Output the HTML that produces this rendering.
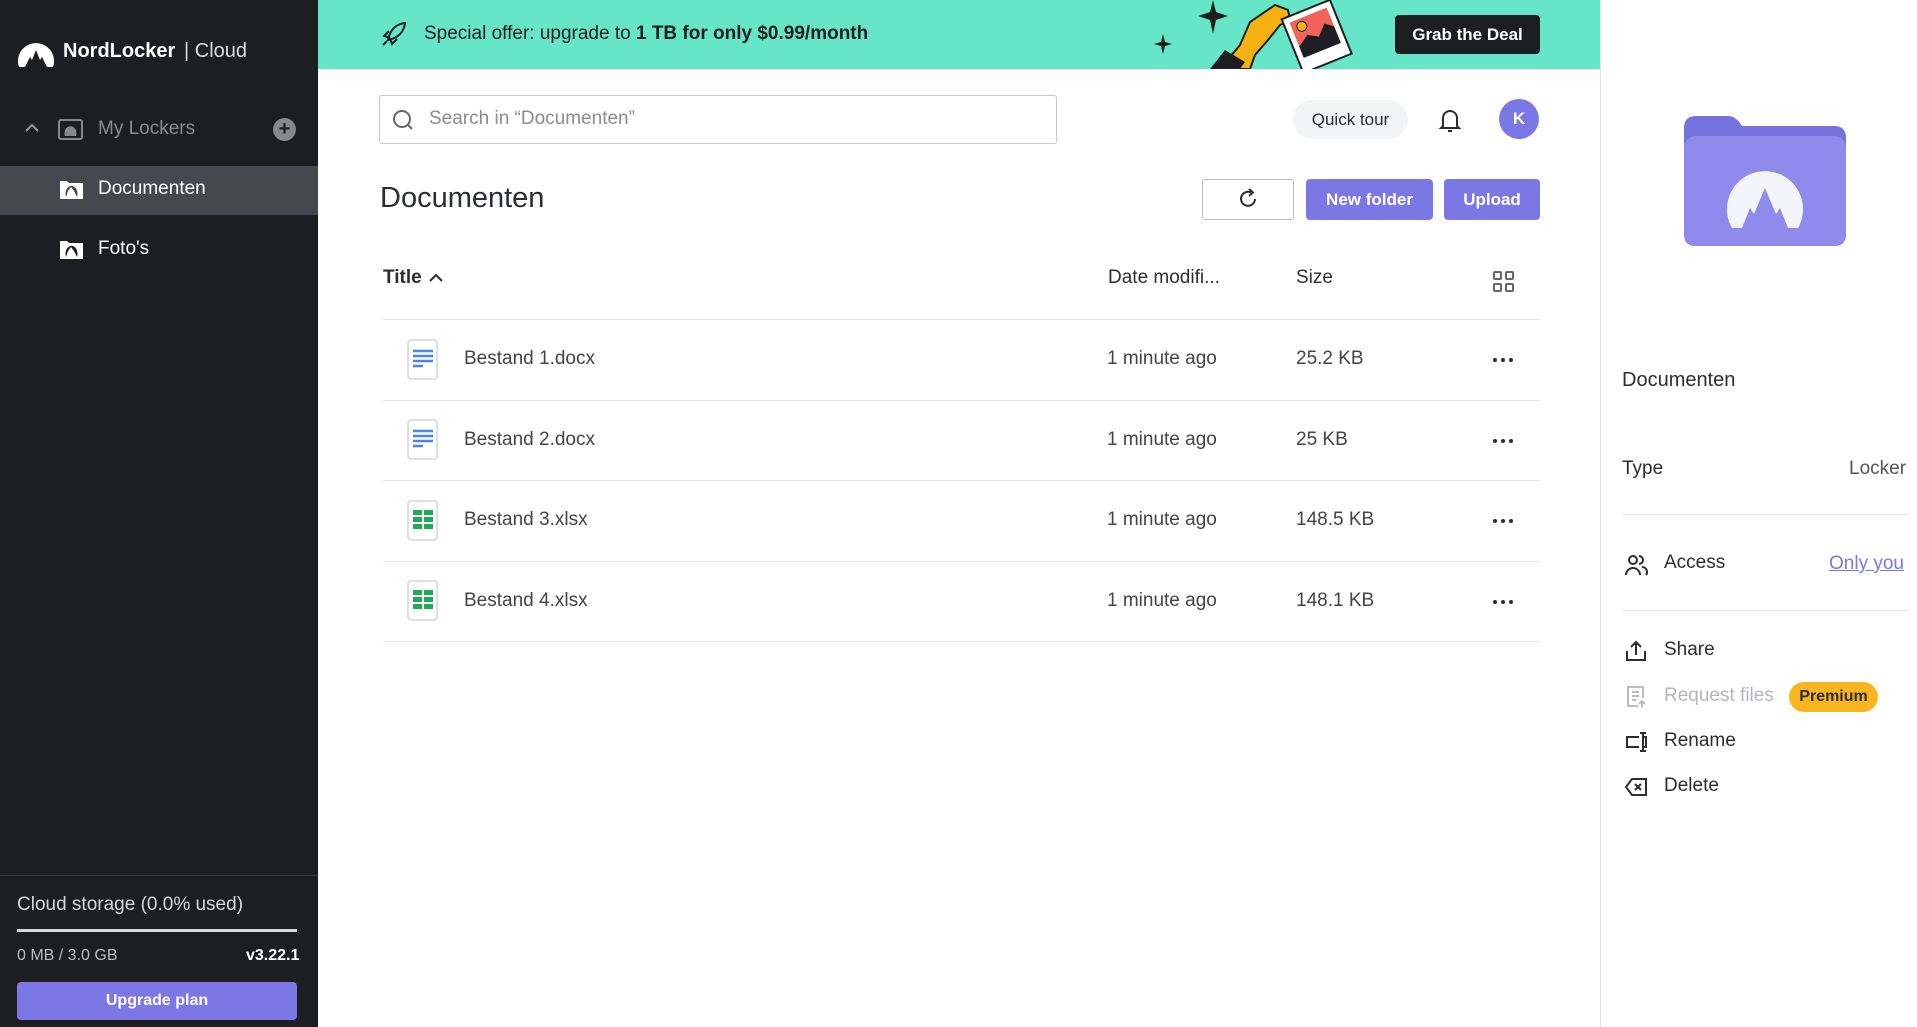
<!DOCTYPE html>
<html><head><meta charset="utf-8"><style>
*{box-sizing:border-box;margin:0;padding:0}
body{width:1917px;height:1027px;position:relative;overflow:hidden;background:#fff;font-family:"Liberation Sans",sans-serif;color:#2b2d31}
.a{position:absolute}
.sb{left:0;top:0;width:318px;height:1027px;background:#1c1e22}
.t{position:absolute;white-space:nowrap}
.row{position:absolute;left:383px;width:1157px;height:80px;border-bottom:1px solid #e3e4e6}
.btn{position:absolute;border-radius:4px;color:#fff;font-weight:bold;font-size:17px;display:flex;align-items:center;justify-content:center}
</style></head><body>
<div class="a sb"></div>
<svg class="a" style="left:16px;top:33px" width="40" height="36" viewBox="0 0 40 36"><path d="M3 34 A18 18 0 1 1 37 34 L31 34 L26 24 L24 27 L20 17 L16 27 L14 24 L9 34Z" fill="#fff"/></svg>
<div class="t" style="left:63px;top:40px;color:#fff;font-size:20px;font-weight:bold">NordLocker</div>
<div class="t" style="left:184px;top:40px;color:#ddd;font-size:20px">| Cloud</div>
<svg class="a" style="left:24px;top:122px" width="16" height="12"><path d="M2 9 L8 3 L14 9" stroke="#999" stroke-width="2" fill="none"/></svg>
<svg class="a" style="left:58px;top:117px" width="26" height="24"><rect x="1" y="3" width="23" height="19" rx="2" fill="none" stroke="#888" stroke-width="2"/><path d="M7 19 A6 7 0 1 1 18 19" fill="#888"/></svg>
<div class="t" style="left:98px;top:118px;color:#8a8c90;font-size:19px">My Lockers</div>
<div class="a" style="left:273px;top:118px;width:23px;height:23px;border-radius:50%;background:#888;color:#1c1e22;font-size:20px;font-weight:bold;text-align:center;line-height:23px">+</div>
<div class="a" style="left:0;top:166px;width:318px;height:49px;background:#45484e"></div>
<svg class="a" style="left:59px;top:178px" width="25" height="22"><path d="M1 3 h7 l2 2 h14 v16 h-23z" fill="#fff"/><path d="M7 19 A6 8 0 1 1 18 19 L15 13 L12 9 L9 13Z" fill="#45484e"/></svg>
<div class="t" style="left:98px;top:178px;color:#fff;font-size:19px">Documenten</div>
<svg class="a" style="left:59px;top:238px" width="25" height="22"><path d="M1 3 h7 l2 2 h14 v16 h-23z" fill="#fff"/><path d="M7 19 A6 8 0 1 1 18 19 L15 13 L12 9 L9 13Z" fill="#1c1e22"/></svg>
<div class="t" style="left:98px;top:238px;color:#fff;font-size:19px">Foto's</div>
<div class="a" style="left:0;top:875px;width:318px;height:1px;background:#3a3c40"></div>
<div class="t" style="left:17px;top:894px;color:#d8d8d8;font-size:19px">Cloud storage (0.0% used)</div>
<div class="a" style="left:17px;top:929px;width:280px;height:3px;background:#d8d8d8"></div>
<div class="t" style="left:17px;top:947px;color:#bbb;font-size:16px">0 MB / 3.0 GB</div>
<div class="t" style="left:246px;top:947px;color:#fff;font-size:16px;font-weight:bold">v3.22.1</div>
<div class="btn" style="left:17px;top:982px;width:280px;height:38px;background:#7b78e6;font-size:16px">Upgrade plan</div>
<div class="a" style="left:318px;top:0;width:1282px;height:69px;background:#66e6c6"></div>
<svg class="a" style="left:380px;top:20px" width="28" height="28" viewBox="0 0 28 28"><path d="M8 20 C10 10 16 4 25 3 C24 12 18 18 8 20Z M10 18 L4 16 L9 11 M10 18 L12 24 L17 19 M3 25 L7 21" stroke="#1c1e22" stroke-width="2" fill="none"/></svg>
<div class="t" style="left:424px;top:23px;font-size:19px;color:#1c1e22">Special offer: upgrade to <b>1 TB for only $0.99/month</b></div>
<svg class="a" style="left:1150px;top:0" width="240" height="69"><path d="M63 0 L66 12 L78 16 L66 20 L63 34 L60 20 L48 16 L60 12Z M13 34 L15 42 L22 44 L15 46 L13 54 L11 46 L4 44 L11 42Z" fill="#1c1e22"/><path d="M70 69 L90 45 L100 22 L125 5 L138 10 L140 20 L130 25 L118 40 L105 55 L100 69Z" fill="#f5b011" stroke="#1c1e22" stroke-width="2"/><path d="M60 69 L75 50 L95 62 L90 69Z" fill="#1c1e22"/><g transform="rotate(-22 165 35)"><rect x="140" y="8" width="52" height="58" fill="#fff" stroke="#1c1e22" stroke-width="2"/><rect x="146" y="14" width="40" height="38" fill="#f0625a"/><path d="M146 52 L146 40 L158 32 L168 38 L178 28 L186 34 L186 52Z" fill="#1c1e22"/><circle cx="156" cy="22" r="5" fill="#f5b011" stroke="#1c1e22"/></g></svg>
<div class="btn" style="left:1395px;top:15px;width:145px;height:39px;background:#1c1e22;font-size:17px">Grab the Deal</div>
<div class="a" style="left:379px;top:95px;width:678px;height:49px;border:1px solid #c8c9cc;border-radius:3px"></div>
<svg class="a" style="left:392px;top:109px" width="22" height="22"><circle cx="10" cy="10" r="8" stroke="#666" stroke-width="2" fill="none"/><path d="M16 16 L20 20" stroke="#666" stroke-width="2"/></svg>
<div class="t" style="left:429px;top:108px;font-size:19px;color:#8a8c90">Search in “Documenten”</div>
<div class="a" style="left:1293px;top:100px;width:115px;height:39px;border-radius:20px;background:#f3f4f6;font-size:17px;text-align:center;line-height:39px">Quick tour</div>
<svg class="a" style="left:1438px;top:106px" width="24" height="28"><path d="M5 20 V12 A7 7 0 0 1 19 12 V20 L21 22 H3Z" stroke="#2b2d31" stroke-width="2" fill="none"/><path d="M10 25 h4" stroke="#2b2d31" stroke-width="2"/></svg>
<div class="a" style="left:1499px;top:99px;width:40px;height:40px;border-radius:50%;background:#7b78e6;color:#fff;font-weight:bold;font-size:17px;text-align:center;line-height:40px">K</div>
<div class="t" style="left:380px;top:182px;font-size:29px">Documenten</div>
<div class="a" style="left:1202px;top:179px;width:92px;height:41px;border:1px solid #bbb;border-radius:3px"></div>
<svg class="a" style="left:1236px;top:187px" width="24" height="24"><path d="M19 12 A7 7 0 1 1 15 5.5" stroke="#2b2d31" stroke-width="2" fill="none"/><path d="M13 2 L17 5.5 L13 9" stroke="#2b2d31" stroke-width="2" fill="none"/></svg>
<div class="btn" style="left:1306px;top:179px;width:127px;height:41px;background:#7b78e6">New folder</div>
<div class="btn" style="left:1444px;top:179px;width:96px;height:41px;background:#7b78e6">Upload</div>
<div class="t" style="left:383px;top:267px;font-size:19px;font-weight:bold">Title</div>
<svg class="a" style="left:428px;top:272px" width="16" height="12"><path d="M2 9 L8 3 L14 9" stroke="#2b2d31" stroke-width="2" fill="none"/></svg>
<div class="t" style="left:1108px;top:267px;font-size:19px">Date modifi...</div>
<div class="t" style="left:1296px;top:267px;font-size:19px">Size</div>
<svg class="a" style="left:1492px;top:270px" width="24" height="24"><g fill="none" stroke="#666" stroke-width="2"><rect x="2" y="2" width="7" height="7" rx="1"/><rect x="14" y="2" width="7" height="7" rx="1"/><rect x="2" y="14" width="7" height="7" rx="1"/><rect x="14" y="14" width="7" height="7" rx="1"/></g></svg>
<div class="row" style="top:240px"></div>
<div class="row" style="top:321px"></div>
<div class="row" style="top:401px"></div>
<div class="row" style="top:482px"></div>
<div class="row" style="top:562px"></div>
<svg class="a" style="left:407px;top:339px" width="32" height="220">
<g fill="#fff" stroke="#d4d5d8" stroke-width="1.5"><rect x="1" y="1" width="29" height="39" rx="3"/><rect x="1" y="81" width="29" height="39" rx="3"/></g>
<g stroke="#4a86e8" stroke-width="2.5"><path d="M6 12h20M6 17h20M6 22h20M6 27h10M6 92h20M6 97h20M6 102h20M6 107h10"/></g>
</svg>
<svg class="a" style="left:407px;top:500px" width="32" height="125">
<g fill="#fff" stroke="#d4d5d8" stroke-width="1.5"><rect x="1" y="1" width="29" height="39" rx="3"/><rect x="1" y="81" width="29" height="39" rx="3"/></g>
<g fill="#1faa59"><rect x="6" y="10" width="9" height="5"/><rect x="17" y="10" width="9" height="5"/><rect x="6" y="17" width="9" height="5"/><rect x="17" y="17" width="9" height="5"/><rect x="6" y="24" width="9" height="5"/><rect x="17" y="24" width="9" height="5"/><rect x="6" y="90" width="9" height="5"/><rect x="17" y="90" width="9" height="5"/><rect x="6" y="97" width="9" height="5"/><rect x="17" y="97" width="9" height="5"/><rect x="6" y="104" width="9" height="5"/><rect x="17" y="104" width="9" height="5"/></g>
</svg>
<div class="t" style="left:464px;top:348px;font-size:19px;color:#444">Bestand 1.docx</div>
<div class="t" style="left:1107px;top:348px;font-size:19px;color:#444">1 minute ago</div>
<div class="t" style="left:1296px;top:348px;font-size:19px;color:#444">25.2 KB</div>
<div class="t" style="left:464px;top:429px;font-size:19px;color:#444">Bestand 2.docx</div>
<div class="t" style="left:1107px;top:429px;font-size:19px;color:#444">1 minute ago</div>
<div class="t" style="left:1296px;top:429px;font-size:19px;color:#444">25 KB</div>
<div class="t" style="left:464px;top:509px;font-size:19px;color:#444">Bestand 3.xlsx</div>
<div class="t" style="left:1107px;top:509px;font-size:19px;color:#444">1 minute ago</div>
<div class="t" style="left:1296px;top:509px;font-size:19px;color:#444">148.5 KB</div>
<div class="t" style="left:464px;top:590px;font-size:19px;color:#444">Bestand 4.xlsx</div>
<div class="t" style="left:1107px;top:590px;font-size:19px;color:#444">1 minute ago</div>
<div class="t" style="left:1296px;top:590px;font-size:19px;color:#444">148.1 KB</div>
<svg class="a" style="left:1491px;top:355px" width="24" height="260"><g fill="#2b2d31"><circle cx="4" cy="5" r="2"/><circle cx="12" cy="5" r="2"/><circle cx="20" cy="5" r="2"/><circle cx="4" cy="86" r="2"/><circle cx="12" cy="86" r="2"/><circle cx="20" cy="86" r="2"/><circle cx="4" cy="166" r="2"/><circle cx="12" cy="166" r="2"/><circle cx="20" cy="166" r="2"/><circle cx="4" cy="247" r="2"/><circle cx="12" cy="247" r="2"/><circle cx="20" cy="247" r="2"/></g></svg>
<div class="a" style="left:1600px;top:0;width:1px;height:1027px;background:#e6e7e9"></div>
<svg class="a" style="left:1684px;top:116px" width="162" height="130" viewBox="0 0 162 130"><path d="M0 12 Q0 0 12 0 H44 Q52 0 58 10 H150 Q162 10 162 22 V118 Q162 130 150 130 H12 Q0 130 0 118Z" fill="#7673e0"/><rect x="0" y="20" width="162" height="110" rx="12" fill="#8e8bec"/><path d="M48 112 A38 38 0 1 1 114 112 L104 112 L96 92 L92 98 L81 72 L70 98 L66 92 L58 112Z" fill="#f4f4fb"/></svg>
<div class="t" style="left:1622px;top:369px;font-size:20px">Documenten</div>
<div class="t" style="left:1622px;top:458px;font-size:19px">Type</div>
<div class="t" style="left:1849px;top:458px;font-size:19px;color:#555">Locker</div>
<div class="a" style="left:1622px;top:514px;width:285px;height:1px;background:#e3e4e6"></div>
<svg class="a" style="left:1624px;top:553px" width="24" height="24"><g fill="none" stroke="#2b2d31" stroke-width="2"><circle cx="9" cy="7" r="4"/><path d="M2 22 A7 7 0 0 1 16 22M15 3 A4 4 0 0 1 15 11M18 14 A5 5 0 0 1 22 22"/></g></svg>
<div class="t" style="left:1664px;top:552px;font-size:19px">Access</div>
<div class="t" style="left:1829px;top:553px;font-size:19px;color:#7b78e6;text-decoration:underline">Only you</div>
<div class="a" style="left:1622px;top:610px;width:285px;height:1px;background:#e3e4e6"></div>
<svg class="a" style="left:1624px;top:639px" width="24" height="24"><g fill="none" stroke="#2b2d31" stroke-width="2"><path d="M3 12 V21 H21 V12M12 16 V3M7 8 L12 3 L17 8"/></g></svg>
<div class="t" style="left:1664px;top:639px;font-size:19px">Share</div>
<svg class="a" style="left:1624px;top:685px" width="24" height="24"><g fill="none" stroke="#bbb" stroke-width="2"><path d="M14 21 H4 V2 H19 V13M8 7h7M8 11h7M8 15h4M18 22 V16M15 19 L18 16 L21 19"/></g></svg>
<div class="t" style="left:1664px;top:685px;font-size:19px;color:#b5b6b9">Request files</div>
<div class="a" style="left:1789px;top:682px;width:89px;height:30px;border-radius:15px;background:#f9b520;font-weight:bold;font-size:16px;text-align:center;line-height:30px;color:#2b2d31">Premium</div>
<svg class="a" style="left:1624px;top:730px" width="26" height="24"><g fill="none" stroke="#2b2d31" stroke-width="2"><path d="M15 7 H3 V17 H15M19 3 V21M16 3 H22M16 21 H22M19 7 H22 V17 H19"/></g></svg>
<div class="t" style="left:1664px;top:730px;font-size:19px">Rename</div>
<svg class="a" style="left:1624px;top:775px" width="26" height="24"><g fill="none" stroke="#2b2d31" stroke-width="2"><path d="M8 4 H22 V20 H8 L2 12Z M11 9 L17 15 M17 9 L11 15"/></g></svg>
<div class="t" style="left:1664px;top:775px;font-size:19px">Delete</div>
</body></html>
